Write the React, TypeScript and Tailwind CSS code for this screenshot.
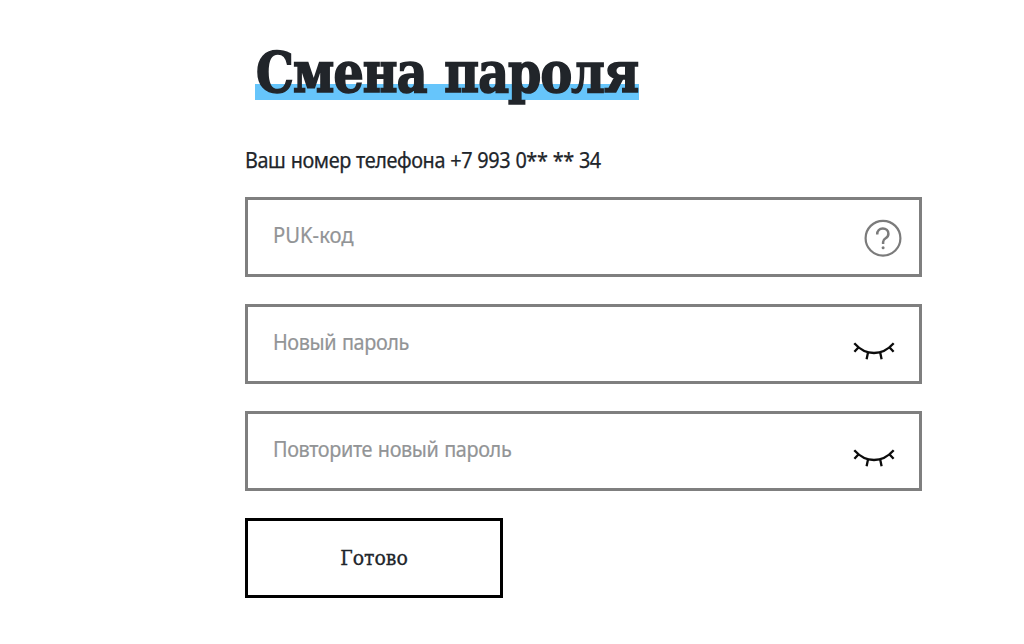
import React from 'react'

interface FieldProps {
  label: string
  icon: React.ReactNode
  /** Latin abbreviations are set wider than the Cyrillic labels */
  wide?: boolean
}

function HelpIcon() {
  return (
    <svg width="38" height="38" viewBox="0 0 38 38" fill="none" stroke="#7b7b7b" strokeWidth="2.2" className="mt-[2px] mr-[17px]">
      <circle cx="19" cy="19.2" r="17.4" />
      <path d="M13.2 15.4c0-3.6 2.3-5.8 5.6-5.8s5.6 2.1 5.6 5.1c0 2.3-1.2 3.6-2.8 4.6-1.8 1.1-2.5 1.8-2.5 3.6v2.2" strokeWidth="2.5" />
      <circle cx="19.1" cy="28.8" r="1.5" fill="#7b7b7b" stroke="none" />
    </svg>
  )
}

function ClosedEyeIcon() {
  return (
    <svg width="42" height="18" viewBox="0 0 42 18" fill="none" stroke="#0c0c0c" strokeWidth="2.3" className="mr-[24px] mt-[13px]">
      <path d="M1.3 1.2C7 7.6 13.5 11 21 11s14-3.4 19.7-9.8" />
      <path d="M5.4 5.4 1.4 9.8M36.6 5.4l4 4.4M15 10.6l-1.4 6.6M27.2 10.6l1.4 6.6" />
    </svg>
  )
}

function Field({ label, icon, wide = false }: FieldProps) {
  return (
    <label className="flex h-20 cursor-text items-center justify-between border-3 border-[#7f7f7f] bg-white pl-[25px]">
      <span
        className={[
          'origin-left pb-1 whitespace-nowrap text-[#929496] [-webkit-text-stroke:0.2px_#929496]',
          wide ? 'scale-x-[0.965]' : 'scale-x-[0.945] tracking-[-0.4px] [word-spacing:1px]',
        ].join(' ')}
      >
        {label}
      </span>
      {icon}
    </label>
  )
}

export default function App() {
  return (
    <main className="min-h-[644px] bg-white pt-[44px] pl-[245px] font-['Noto_Sans',sans-serif] text-[21px] leading-[28px] text-[#21252a]">
      <h1 className="ml-[10px] h-[62px] w-[384px] bg-[linear-gradient(#66c5fb,#66c5fb)] bg-[length:100%_16px] bg-[position:0_40px] bg-no-repeat pl-px font-['DejaVu_Serif_Condensed','DejaVu_Serif',serif] text-[56px] leading-[56px] font-bold whitespace-nowrap">
        <span className="inline-block origin-left scale-x-[0.943] tracking-[-0.9px] [word-spacing:2px] [-webkit-text-stroke:1.6px_#21252a]">
          Смена пароля
        </span>
      </h1>
      <p className="mt-[40px] origin-left scale-x-[0.945] tracking-[-0.43px] [word-spacing:0.5px] whitespace-nowrap [-webkit-text-stroke:0.25px_#21252a]">
        Ваш номер телефона +7 993 0** ** 34
      </p>

      <form className="mt-[23px] flex w-[677px] flex-col gap-[27px]">
        <Field label="PUK-код" icon={<HelpIcon />} wide />
        <Field label="Новый пароль" icon={<ClosedEyeIcon />} />
        <Field label="Повторите новый пароль" icon={<ClosedEyeIcon />} />
        <button
          type="button"
          className="h-20 w-[258px] border-3 border-black font-['DejaVu_Serif_Condensed','DejaVu_Serif',serif] text-[21px] [-webkit-text-stroke:0.3px_#21252a]"
        >
          Готово
        </button>
      </form>
    </main>
  )
}
